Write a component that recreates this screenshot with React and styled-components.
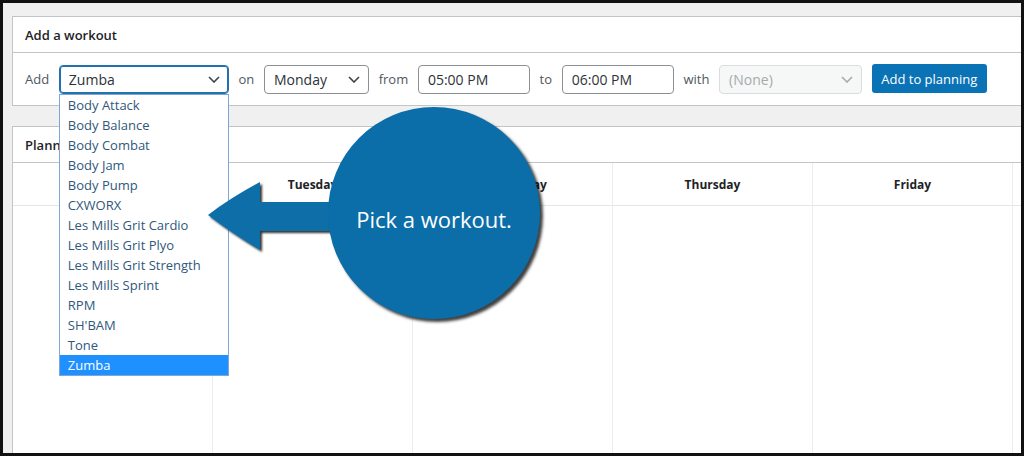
import React from 'react';
import styled, { createGlobalStyle } from 'styled-components';

const GlobalStyle = createGlobalStyle`
  html, body {
    margin: 0;
    padding: 0;
    background: #111;
  }
  body {
    font-family: "Open Sans", "Liberation Sans", sans-serif;
  }
`;

const ScFrame = styled.div`
  position: relative;
  width: 1024px;
  height: 456px;
  box-sizing: border-box;
  border: 3px solid #111;
  background: #f0f0f1;
  overflow: hidden;
  padding: 13px 0 0 9px;
`;

const ScCard = styled.div`
  width: 1040px;
  background: #fff;
  border: 1px solid #c3c4c7;
  margin-top: ${props => props.gap || 0}px;
`;

const ScCardHeader = styled.div`
  height: 35px;
  display: flex;
  align-items: center;
  padding-left: 12px;
  border-bottom: 1px solid #c3c4c7;
  font-size: 13px;
  font-weight: 600;
  color: #1d2327;
`;

const ScFormRow = styled.div`
  height: 52px;
  display: flex;
  align-items: center;
  gap: 9.7px;
  padding-left: 12px;
  font-size: 13px;
`;

const ScLabel = styled.span`
  color: #50575e;
`;

const ScSelectWrap = styled.div`
  position: relative;
  width: ${props => props.width}px;
`;

const ScSelect = styled.div`
  box-sizing: border-box;
  height: 29px;
  display: flex;
  align-items: center;
  justify-content: space-between;
  padding: 0 8px 0 9px;
  border: 1px solid ${props => (props.focused ? '#2271b1' : props.disabled ? '#dcdcde' : '#8c8f94')};
  box-shadow: ${props => (props.focused ? 'inset 0 0 0 1px #2271b1' : 'none')};
  border-radius: 4px;
  background: ${props => (props.disabled ? '#f6f7f7' : '#fff')};
  color: ${props => (props.disabled ? '#a7aaad' : '#2c3338')};
  font-size: 14px;
`;

const ScInput = styled.div`
  box-sizing: border-box;
  width: 112px;
  height: 29px;
  display: flex;
  align-items: center;
  padding-left: 9px;
  border: 1px solid #8c8f94;
  border-radius: 4px;
  color: #2c3338;
  font-size: 14px;
`;

const ScButton = styled.button`
  box-sizing: border-box;
  width: 115px;
  height: 29px;
  margin-top: -1px;
  border: none;
  border-radius: 3px;
  background: #0a73b6;
  color: #fff;
  font-family: inherit;
  font-size: 13px;
  padding: 0;
`;

const ScOptionList = styled.div`
  position: absolute;
  top: 100%;
  left: 0;
  width: 100%;
  box-sizing: border-box;
  border: 1px solid #7ea6d6;
  background: #fff;
  z-index: 3;
`;

const ScOption = styled.div`
  height: 20px;
  line-height: 20px;
  padding-left: 8px;
  font-size: 13px;
  color: ${props => (props.selected ? '#fff' : '#2f587c')};
  background: ${props => (props.selected ? '#1e90ff' : 'transparent')};
`;

const ScTable = styled.div`
  display: grid;
  grid-template-columns: repeat(5, 200px) 24px;
  grid-template-rows: 43px 300px;
`;

const ScDayHead = styled.div`
  display: flex;
  align-items: center;
  justify-content: center;
  border-right: 1px solid #ececec;
  border-bottom: 1px solid #e6e6e6;
  font-size: 12px;
  font-weight: 700;
  color: #1d2327;
`;

const ScDayCell = styled.div`
  border-right: 1px solid #ececec;
`;

const ScArrow = styled.svg`
  position: absolute;
  left: 197px;
  top: 167px;
  z-index: 4;
`;

const ScBubble = styled.div`
  position: absolute;
  left: 325px;
  top: 104px;
  width: 212px;
  height: 212px;
  border-radius: 50%;
  background: #0b6ea8;
  box-shadow: 3px 3px 3px rgba(0, 0, 0, 0.75);
  display: flex;
  align-items: center;
  justify-content: center;
  padding-top: 12px;
  box-sizing: border-box;
  color: #fff;
  font-size: 22px;
  z-index: 5;
`;

const Chevron = ({ color = '#3c434a' }) => (
  <svg width="12" height="7" viewBox="0 0 12 7">
    <path d="M1 1 L6 6 L11 1" fill="none" stroke={color} strokeWidth="1.6" />
  </svg>
);

const workouts = [
  'Body Attack', 'Body Balance', 'Body Combat', 'Body Jam', 'Body Pump', 'CXWORX',
  'Les Mills Grit Cardio', 'Les Mills Grit Plyo', 'Les Mills Grit Strength',
  'Les Mills Sprint', 'RPM', "SH'BAM", 'Tone', 'Zumba',
];

// the sixth column is only the edge of Saturday, cut off by the frame
const days = ['Monday', 'Tuesday', 'Wednesday', 'Thursday', 'Friday', ''];

const App = () => (
  <>
    <GlobalStyle />
    <ScFrame>
      <ScCard>
        <ScCardHeader>Add a workout</ScCardHeader>
        <ScFormRow>
          <ScLabel>Add</ScLabel>
          <ScSelectWrap width={170}>
            <ScSelect focused>
              Zumba
              <Chevron />
            </ScSelect>
            <ScOptionList>
              {workouts.map(w => (
                <ScOption key={w} selected={w === 'Zumba'}>{w}</ScOption>
              ))}
            </ScOptionList>
          </ScSelectWrap>
          <ScLabel>on</ScLabel>
          <ScSelectWrap width={105}>
            <ScSelect>
              Monday
              <Chevron />
            </ScSelect>
          </ScSelectWrap>
          <ScLabel>from</ScLabel>
          <ScInput>05:00 PM</ScInput>
          <ScLabel>to</ScLabel>
          <ScInput>06:00 PM</ScInput>
          <ScLabel>with</ScLabel>
          <ScSelectWrap width={143}>
            <ScSelect disabled>
              (None)
              <Chevron color="#a7aaad" />
            </ScSelect>
          </ScSelectWrap>
          <ScButton>Add to planning</ScButton>
        </ScFormRow>
      </ScCard>

      <ScCard gap={20}>
        <ScCardHeader>Planning</ScCardHeader>
        <ScTable>
          {days.map((d, i) => <ScDayHead key={i}>{d}</ScDayHead>)}
          {days.map((d, i) => <ScDayCell key={i} />)}
        </ScTable>
      </ScCard>

      <ScArrow width="190" height="90" viewBox="0 0 190 90">
        <defs>
          <filter id="arrowShadow" x="-10%" y="-20%" width="130%" height="150%">
            <feDropShadow dx="2" dy="2" stdDeviation="1.2" floodColor="#000" floodOpacity="0.8" />
          </filter>
        </defs>
        <path
          d="M8 45 Q30 28 60 12 L60 32 L185 32 L185 61 L60 61 L60 80 Q30 62 8 45 Z"
          fill="#0b6ea8"
          filter="url(#arrowShadow)"
        />
      </ScArrow>
      <ScBubble>Pick a workout.</ScBubble>
    </ScFrame>
  </>
);

export default App;
